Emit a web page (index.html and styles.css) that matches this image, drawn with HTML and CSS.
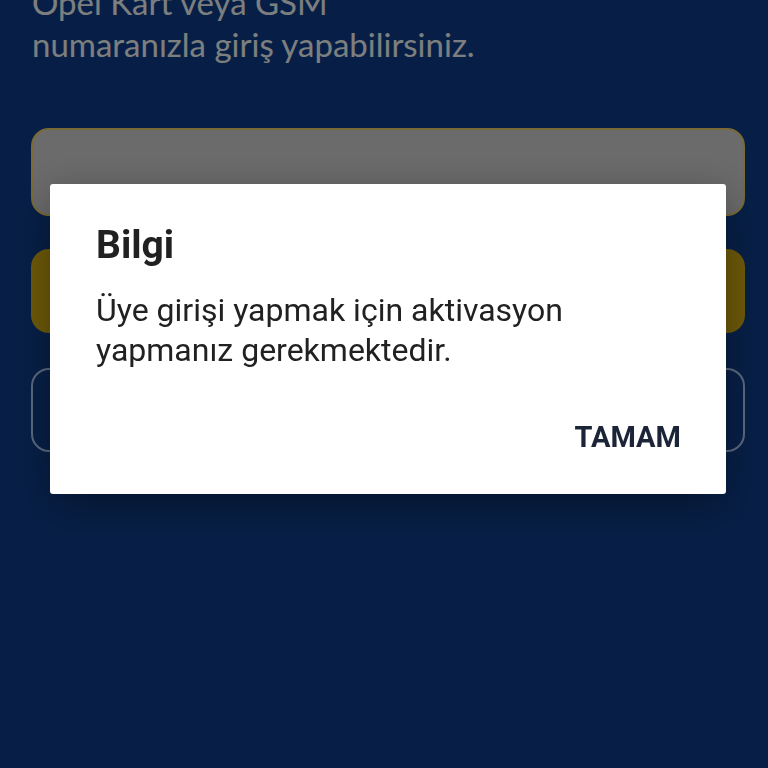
FILE: index.html
```html
<!DOCTYPE html>
<html lang="tr">
<head>
  <meta charset="UTF-8" />
  <meta name="viewport" content="width=device-width, initial-scale=1.0" />
  <title>Giriş</title>
  <link rel="stylesheet" href="styles.css">
</head>
<body>
  <div class="login-screen">

    <!-- Intro text -->
    <p class="login-intro">Opel Kart veya GSM<br>numaranızla giriş yapabilirsiniz.</p>

    <!-- Form -->
    <div class="login-input"></div>
    <div class="btn-primary"></div>
    <div class="btn-outline"></div>
  </div>

  <!-- Info dialog -->
  <div class="scrim">
    <div class="dialog">
      <div class="dialog-title">Bilgi</div>
      <div class="dialog-text">Üye girişi yapmak için aktivasyon<br>yapmanız gerekmektedir.</div>
      <div class="dialog-actions">
        <button class="dialog-btn">TAMAM</button>
      </div>
    </div>
  </div>
</body>
</html>
```

FILE: styles.css
```css
:root {
  --navy: #0f3f8e;
  --gold: #dcb414;
  --input-bg: #d6d6d6;
  --input-border: #f2d470;
  --outline: #b8d4ff;
  --dialog-text: #212121;
  --action: #1c2538;
}

* {
  box-sizing: border-box;
  margin: 0;
  padding: 0;
}

html, body {
  height: 100%;
  overflow: hidden;
  background-color: var(--navy);
}

.login-screen {
  display: flex;
  flex-direction: column;
  padding: 0 23px 0 31px;
  margin-top: -19px;
}

.login-intro {
  font-family: "Lato", sans-serif;
  font-size: 33px;
  line-height: 42px;
  color: #fbffff;
  margin-bottom: 63px;
  padding-left: 1px;
}

.login-input {
  height: 88px;
  border-radius: 18px;
  background-color: var(--input-bg);
  border: 2px solid var(--input-border);
}

.btn-primary {
  height: 84px;
  margin-top: 33px;
  border-radius: 18px;
  background-color: var(--gold);
}

.btn-outline {
  height: 84px;
  margin-top: 35px;
  border-radius: 18px;
  border: 2px solid var(--outline);
}

.scrim {
  position: fixed;
  inset: 0;
  background-color: rgba(0, 0, 0, 0.5);
  display: flex;
  justify-content: center;
  align-items: flex-start;
  padding-top: 184px;
}

.dialog {
  width: 676px;
  margin-left: 8px;
  background-color: #ffffff;
  border-radius: 3px;
  padding: 39px 45px 37px 46px;
  box-shadow: 0 12px 40px rgba(0, 0, 0, 0.35);
  font-family: "Roboto", sans-serif;
}

.dialog-title {
  font-size: 39px;
  line-height: 44px;
  font-weight: 700;
  color: var(--dialog-text);
}

.dialog-text {
  margin-top: 23px;
  font-size: 32px;
  line-height: 40px;
  color: var(--dialog-text);
}

.dialog-actions {
  display: flex;
  justify-content: flex-end;
  margin-top: 47px;
}

.dialog-btn {
  background: none;
  border: none;
  font-family: "Roboto", sans-serif;
  font-size: 29px;
  line-height: 40px;
  font-weight: 700;
  color: var(--action);
  cursor: pointer;
}
```
